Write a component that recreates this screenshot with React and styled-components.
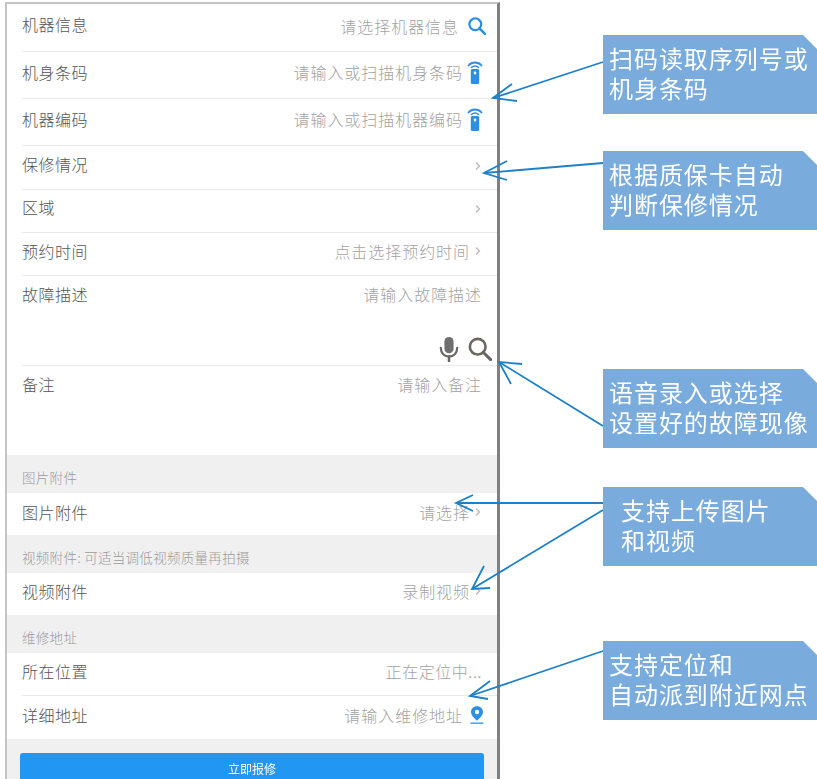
import React from "react";
import styled, { createGlobalStyle } from "styled-components";
import { ChevronRight } from "lucide-react";

const GlobalStyle = createGlobalStyle`
  html, body {
    margin: 0;
    padding: 0;
    background: #fff;
  }
  * {
    box-sizing: border-box;
  }
`;

const Page = styled.div`
  position: relative;
  width: 817px;
  height: 779px;
  overflow: hidden;
  display: flex;
  align-items: flex-start;
  padding: 2px 0 0 5px;
  font-family: "Noto Sans CJK SC", "Noto Sans", sans-serif;
`;

const Phone = styled.div`
  width: 495px;
  height: 790px;
  flex: none;
  background: #fff;
  border-top: 2px solid #c4c4c4;
  border-left: 2px solid #c4c4c4;
  border-right: 3px solid #808080;
  filter: blur(0.5px);
`;

const Row = styled.div`
  height: ${(p) => p.$height}px;
  margin-left: 15px;
  padding-right: 15px;
  display: flex;
  justify-content: space-between;
  align-items: ${(p) => (p.$top ? "flex-start" : "center")};
  padding-top: ${(p) => (p.$top ? "7px" : "0")};
  padding-bottom: ${(p) => (p.$top ? 0 : p.$lift ?? 4)}px;
  border-bottom: ${(p) => (p.$last ? "none" : "1px solid #e9e9e9")};
`;

const Label = styled.span`
  font-size: 16px;
  letter-spacing: 0.5px;
  font-weight: 300;
  color: #555;
  line-height: 22px;
`;

const Value = styled.span`
  display: flex;
  align-items: center;
  gap: ${(p) => p.$gap || 0}px;
  margin-top: ${(p) => p.$drop || 0}px;
  font-size: 16px;
  letter-spacing: ${(p) => p.$spacing ?? 0.95}px;
  font-weight: 300;
  color: #a3a3a3;
  line-height: 22px;
`;

const IconSlot = styled.span`
  display: flex;
  flex: none;
  margin-right: ${(p) => p.$shift || 0}px;
`;

const Chevron = styled(ChevronRight)`
  display: block;
  color: #bdbdbd;
  margin-right: -2px;
`;

const DescriptionBlock = styled.div`
  height: 90px;
  margin-left: 15px;
  border-bottom: 1px solid #e9e9e9;
`;

const DescriptionRow = styled(Row)`
  height: 60px;
  margin-left: 0;
  border-bottom: none;
`;

const DescriptionTools = styled.div`
  display: flex;
  justify-content: flex-end;
  align-items: center;
  gap: 9px;
  padding-right: 5px;
`;

const SectionTitle = styled.div`
  height: 38px;
  padding: 12px 0 0 15px;
  background: #f0f0f0;
  font-size: 13.5px;
  letter-spacing: 0.3px;
  font-weight: 300;
  line-height: 20px;
  color: #9b9b9b;
`;

const Footer = styled.div`
  height: 60px;
  background: #f0f0f0;
  padding: 14px 13px 0 13px;
`;

const SubmitButton = styled.button`
  display: flex;
  justify-content: center;
  width: 464px;
  height: 44px;
  border: none;
  border-radius: 3px;
  padding: 8px 0 0;
  background: #2196f3;
  color: #fff;
  font-family: inherit;
  font-size: 12px;
  line-height: 16px;
`;

const Notes = styled.aside`
  flex: none;
  width: 214px;
  margin-left: 103px;
  display: flex;
  flex-direction: column;
`;

const Note = styled.div`
  height: 79px;
  margin-top: ${(p) => p.$top}px;
  padding: 8px 0 0 ${(p) => p.$indent || 6}px;
  background: #79acdc;
  clip-path: polygon(0 0, 200px 0, 100% 14px, 100% 100%, 0 100%);
  color: #fff;
  font-size: 24px;
  line-height: 30px;
  letter-spacing: 0.95px;
  white-space: pre-line;
  filter: blur(0.3px);
`;

const ArrowLayer = styled.svg`
  position: absolute;
  left: 0;
  top: 0;
  pointer-events: none;
`;

const BLUE = "#2b8fe8";
const DARK = "#6b665f";

const BeaconIcon = () => (
  <svg width="16" height="23" viewBox="0 0 16 23" fill="none">
    <path d="M1.500 4.500C5 0.500 11 0.500 14.500 4.500" stroke={BLUE} strokeWidth="1.800" strokeLinecap="round" />
    <path d="M4.500 6.500C6.500 4.700 9.500 4.700 11.500 6.500" stroke={BLUE} strokeWidth="1.600" strokeLinecap="round" />
    <rect x="3.800" y="8" width="8.400" height="15" rx="1.500" fill={BLUE} />
    <rect x="6.800" y="10.500" width="2.400" height="3" rx="1" fill="#fff" />
  </svg>
);

const MicIcon = () => (
  <svg width="20" height="26" viewBox="1.500 0 21 28.500" fill="none">
    <rect x="7" y="1" width="10" height="18" rx="5" fill="#6f6f6f" />
    <path d="M3 13c0 6 4 9.500 9 9.500s9-3.500 9-9.500" stroke={DARK} strokeWidth="2.400" strokeLinecap="round" />
    <path d="M12 22.500V27.500" stroke={DARK} strokeWidth="2.800" strokeLinecap="round" />
  </svg>
);

const SearchIcon = ({ size, color, weight }) => (
  <svg width={size} height={size} viewBox="0 0 26 26" fill="none">
    <circle cx="10.500" cy="10.500" r="8.500" stroke={color} strokeWidth={weight} />
    <path d="M16.500 16.500L24.500 24.500" stroke={color} strokeWidth={weight + 0.4} strokeLinecap="round" />
  </svg>
);

const PinIcon = () => (
  <svg width="14" height="18" viewBox="0 0 14 18" fill="none">
    <path d="M7 0.300C3.500 0.300 1 2.900 1 6C1 9.600 5 12.800 7 14.800C9 12.800 13 9.600 13 6C13 2.900 10.500 0.300 7 0.300Z" fill={BLUE} />
    <circle cx="7" cy="6" r="2.200" fill="#fff" />
    <rect x="0.500" y="16.500" width="13" height="1.300" fill={BLUE} />
  </svg>
);

const arrows = [
  { from: [603, 62], to: [493, 98], head: [[512, 84], [517, 101]] },
  { from: [603, 163], to: [484, 173], head: [[507, 161], [507, 180]] },
  { from: [603, 426], to: [499, 362], head: [[522, 364], [511, 384]] },
  { from: [603, 503], to: [456, 503], head: [[473, 495], [473, 511]] },
  { from: [603, 510], to: [472, 589], head: [[484, 566], [490, 588]] },
  { from: [603, 651], to: [470, 696], head: [[490, 681], [488, 699]] },
];

const Arrows = () => (
  <ArrowLayer width="817" height="779" viewBox="0 0 817 779" fill="none">
    {arrows.map(({ from, to, head }, i) => (
      <g key={i} stroke="#1d80c8" strokeWidth="1.800">
        <path d={`M${from[0]} ${from[1]}L${to[0]} ${to[1]}`} />
        <path d={`M${head[0][0]} ${head[0][1]}L${to[0]} ${to[1]}L${head[1][0]} ${head[1][1]}`} />
      </g>
    ))}
  </ArrowLayer>
);

const notes = [
  { top: 33, text: "扫码读取序列号或\n机身条码" },
  { top: 37, text: "根据质保卡自动\n判断保修情况" },
  { top: 139, text: "语音录入或选择\n设置好的故障现像" },
  { top: 39, indent: 18, text: "支持上传图片\n和视频" },
  { top: 75, text: "支持定位和\n自动派到附近网点" },
];

const Arrow = () => <Chevron size={12} strokeWidth={3} />;

const App = () => (
  <Page>
    <GlobalStyle />
    <Phone>
      <Row $height={48} $lift={8}>
        <Label>机器信息</Label>
        <Value $gap={9} $drop={4}>
          请选择机器信息
          <IconSlot $shift={-4}>
            <SearchIcon size={18} color={BLUE} weight={3.2} />
          </IconSlot>
        </Value>
      </Row>
      <Row $height={47} $lift={6}>
        <Label>机身条码</Label>
        <Value $gap={4}>
          请输入或扫描机身条码
          <IconSlot $shift={-1}>
            <BeaconIcon />
          </IconSlot>
        </Value>
      </Row>
      <Row $height={47} $lift={6}>
        <Label>机器编码</Label>
        <Value $gap={4}>
          请输入或扫描机器编码
          <IconSlot $shift={-1}>
            <BeaconIcon />
          </IconSlot>
        </Value>
      </Row>
      <Row $height={44} $lift={8}>
        <Label>保修情况</Label>
        <Value $drop={5}>
          <Arrow />
        </Value>
      </Row>
      <Row $height={43} $lift={8}>
        <Label>区域</Label>
        <Value $drop={4}>
          <Arrow />
        </Value>
      </Row>
      <Row $height={43} $lift={6}>
        <Label>预约时间</Label>
        <Value $gap={2}>
          点击选择预约时间
          <Arrow />
        </Value>
      </Row>
      <DescriptionBlock>
        <DescriptionRow $height={60} $top $last>
          <Label>故障描述</Label>
          <Value>请输入故障描述</Value>
        </DescriptionRow>
        <DescriptionTools>
          <MicIcon />
          <SearchIcon size={24} color={DARK} weight={2.800} />
        </DescriptionTools>
      </DescriptionBlock>
      <Row $height={89} $top $last>
        <Label>备注</Label>
        <Value>请输入备注</Value>
      </Row>
      <SectionTitle>图片附件</SectionTitle>
      <Row $height={42} $last>
        <Label>图片附件</Label>
        <Value $gap={2}>
          请选择
          <Arrow />
        </Value>
      </Row>
      <SectionTitle>视频附件: 可适当调低视频质量再拍摄</SectionTitle>
      <Row $height={42} $last $lift={6}>
        <Label>视频附件</Label>
        <Value $gap={2}>
          录制视频
          <Arrow />
        </Value>
      </Row>
      <SectionTitle>维修地址</SectionTitle>
      <Row $height={43} $lift={6}>
        <Label>所在位置</Label>
        <Value $spacing={0.55}>正在定位中...</Value>
      </Row>
      <Row $height={43} $last $lift={6}>
        <Label>详细地址</Label>
        <Value $gap={7}>
          请输入维修地址
          <IconSlot $shift={-2}>
            <PinIcon />
          </IconSlot>
        </Value>
      </Row>
      <Footer>
        <SubmitButton>立即报修</SubmitButton>
      </Footer>
    </Phone>
    <Notes>
      {notes.map((note) => (
        <Note key={note.text} $top={note.top} $indent={note.indent}>
          {note.text}
        </Note>
      ))}
    </Notes>
    <Arrows />
  </Page>
);

export default App;
